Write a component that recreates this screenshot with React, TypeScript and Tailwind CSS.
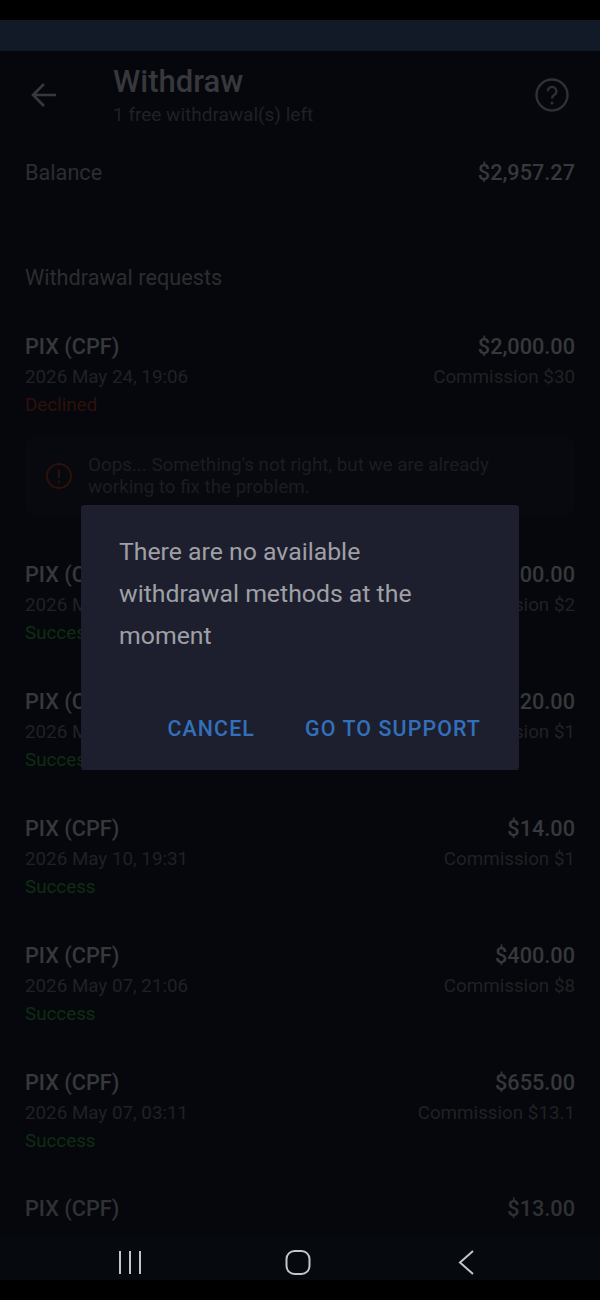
import React from "react";

const rows = [
  { amount: "$2,000.00", date: "2026 May 24, 19:06", commission: "Commission $30", status: "Declined" },
  { amount: "$100.00", date: "2026 May 20, 12:41", commission: "Commission $2", status: "Success" },
  { amount: "$20.00", date: "2026 May 14, 18:12", commission: "Commission $1", status: "Success" },
  { amount: "$14.00", date: "2026 May 10, 19:31", commission: "Commission $1", status: "Success" },
  { amount: "$400.00", date: "2026 May 07, 21:06", commission: "Commission $8", status: "Success" },
  { amount: "$655.00", date: "2026 May 07, 03:11", commission: "Commission $13.1", status: "Success" },
];

const Row = ({ item }: { item: (typeof rows)[number] }) => {
  const declined = item.status === "Declined";
  return (
    <div className="shrink-0 px-[25px]">
      <div className="flex h-[31px] items-center justify-between pt-[1px] text-[21.7px] font-medium text-[#37383b]">
        <span>PIX (CPF)</span>
        <span>{item.amount}</span>
      </div>
      <div className="flex h-[30px] items-center justify-between text-[18.8px] text-[#202124]">
        <span>{item.date}</span>
        <span>{item.commission}</span>
      </div>
      <div className={`flex h-[27px] items-center text-[18.8px] ${declined ? "text-[#2e110b]" : "text-[#0e2e12]"}`}>
        {item.status}
      </div>
    </div>
  );
};

export default function App() {
  return (
    <div className="relative flex h-[1300px] w-[600px] flex-col overflow-hidden bg-black font-['Roboto',sans-serif]">
      <div className="h-5 shrink-0 bg-black" />
      <div className="h-[31px] shrink-0 bg-[#121a28]" />

      <div className="flex min-h-0 flex-1 flex-col overflow-hidden bg-[#05070c]">
        <header className="flex h-[87px] shrink-0 items-start border-b border-[#08090e] pl-[30px] pr-[31px]">
          <svg className="mt-[31px] h-[26px] w-[27px] shrink-0" viewBox="0 0 27 26" fill="none" stroke="#37383b" strokeWidth="2.6">
            <path d="M26 13H3M14 2 3 13l11 11" />
          </svg>
          <div className="ml-[56px] flex-1 pt-[11px]">
            <div className="text-[31px] leading-[40px] font-medium text-[#37383b]">Withdraw</div>
            <div className="text-[19px] leading-[26px] text-[#202124]">1 free withdrawal(s) left</div>
          </div>
          <svg className="mt-[27px] h-[34px] w-[34px] shrink-0" viewBox="0 0 34 34" fill="none">
            <circle cx="17" cy="17" r="15.5" stroke="#2f3033" strokeWidth="2.4" />
            <path d="M12.8 13.2a4.3 4.3 0 1 1 6.7 3.6c-1.6 1-2.4 1.9-2.4 3.6" stroke="#2f3033" strokeWidth="2.4" />
            <circle cx="17" cy="25" r="1.6" fill="#2f3033" />
          </svg>
        </header>

        <div className="flex h-[70px] shrink-0 items-center justify-between px-[25px] pt-[1px] text-[21.7px] text-[#2c2d30]">
          <span>Balance</span>
          <span className="font-medium text-[#37383b]">$2,957.27</span>
        </div>

        <div className="mt-[50px] flex h-[73px] shrink-0 items-start px-[25px] pt-[4px] text-[21.7px] text-[#2c2d30]">
          Withdrawal requests
        </div>

        <Row item={rows[0]} />

        <div className="mx-[25px] mt-[16px] flex h-[82px] shrink-0 items-center gap-[16px] rounded-xl bg-[#07090e] pl-[21px] pr-[60px]">
          <svg className="h-[26px] w-[26px] shrink-0" viewBox="0 0 26 26" fill="none" stroke="#2e110b" strokeWidth="2">
            <circle cx="13" cy="13" r="12" />
            <path d="M13 6.5v8.5M13 17.5v2.5" />
          </svg>
          <div className="text-[18.8px] leading-[22.5px] text-[#1c1d21]">
            Oops... Something's not right, but we are already working to fix the problem.
          </div>
        </div>

        <div className="mt-[42px] flex flex-col gap-[39px]">
          {rows.slice(1).map((item, index) => (
            <Row key={`row-${index}`} item={item} />
          ))}
          <div className="flex h-[31px] shrink-0 items-center justify-between px-[25px] text-[21.7px] font-medium text-[#303134]">
            <span>PIX (CPF)</span>
            <span>$13.00</span>
          </div>
        </div>
      </div>

      <nav className="flex h-[45px] shrink-0 items-start bg-[#06090e] pl-[118px] pt-[15px]">
        <svg className="h-[25px] w-[24px]" viewBox="0 0 24 25" fill="none" stroke="#c4c5c7" strokeWidth="2">
          <path d="M2 1v23M12 1v23M22 1v23" />
        </svg>
        <svg className="ml-[143px] h-[25px] w-[26px]" viewBox="0 0 26 25" fill="none" stroke="#c4c5c7" strokeWidth="2">
          <rect x="1.5" y="1" width="23" height="23" rx="8" />
        </svg>
        <svg className="ml-[147px] h-[25px] w-[16px]" viewBox="0 0 16 25" fill="none" stroke="#c4c5c7" strokeWidth="2">
          <path d="M15 1 2 12.5 15 24" />
        </svg>
      </nav>
      <div className="h-5 shrink-0 bg-black" />

      <div className="absolute left-[81px] top-[505px] flex h-[265px] w-[438px] flex-col rounded-[3px] bg-[#1d1f2e] pl-[38px] pr-[60px] pt-[26px]">
        <div className="text-[24.8px] leading-[42px] text-[#9fa0a5]">
          There are no available withdrawal methods at the moment
        </div>
        <div className="mt-auto -mr-[22px] mb-[27px] flex justify-end gap-[50px] text-[21.4px] leading-[28px] font-medium tracking-[1.1px] text-[#3270bb]">
          <span>CANCEL</span>
          <span>GO TO SUPPORT</span>
        </div>
      </div>
    </div>
  );
}
